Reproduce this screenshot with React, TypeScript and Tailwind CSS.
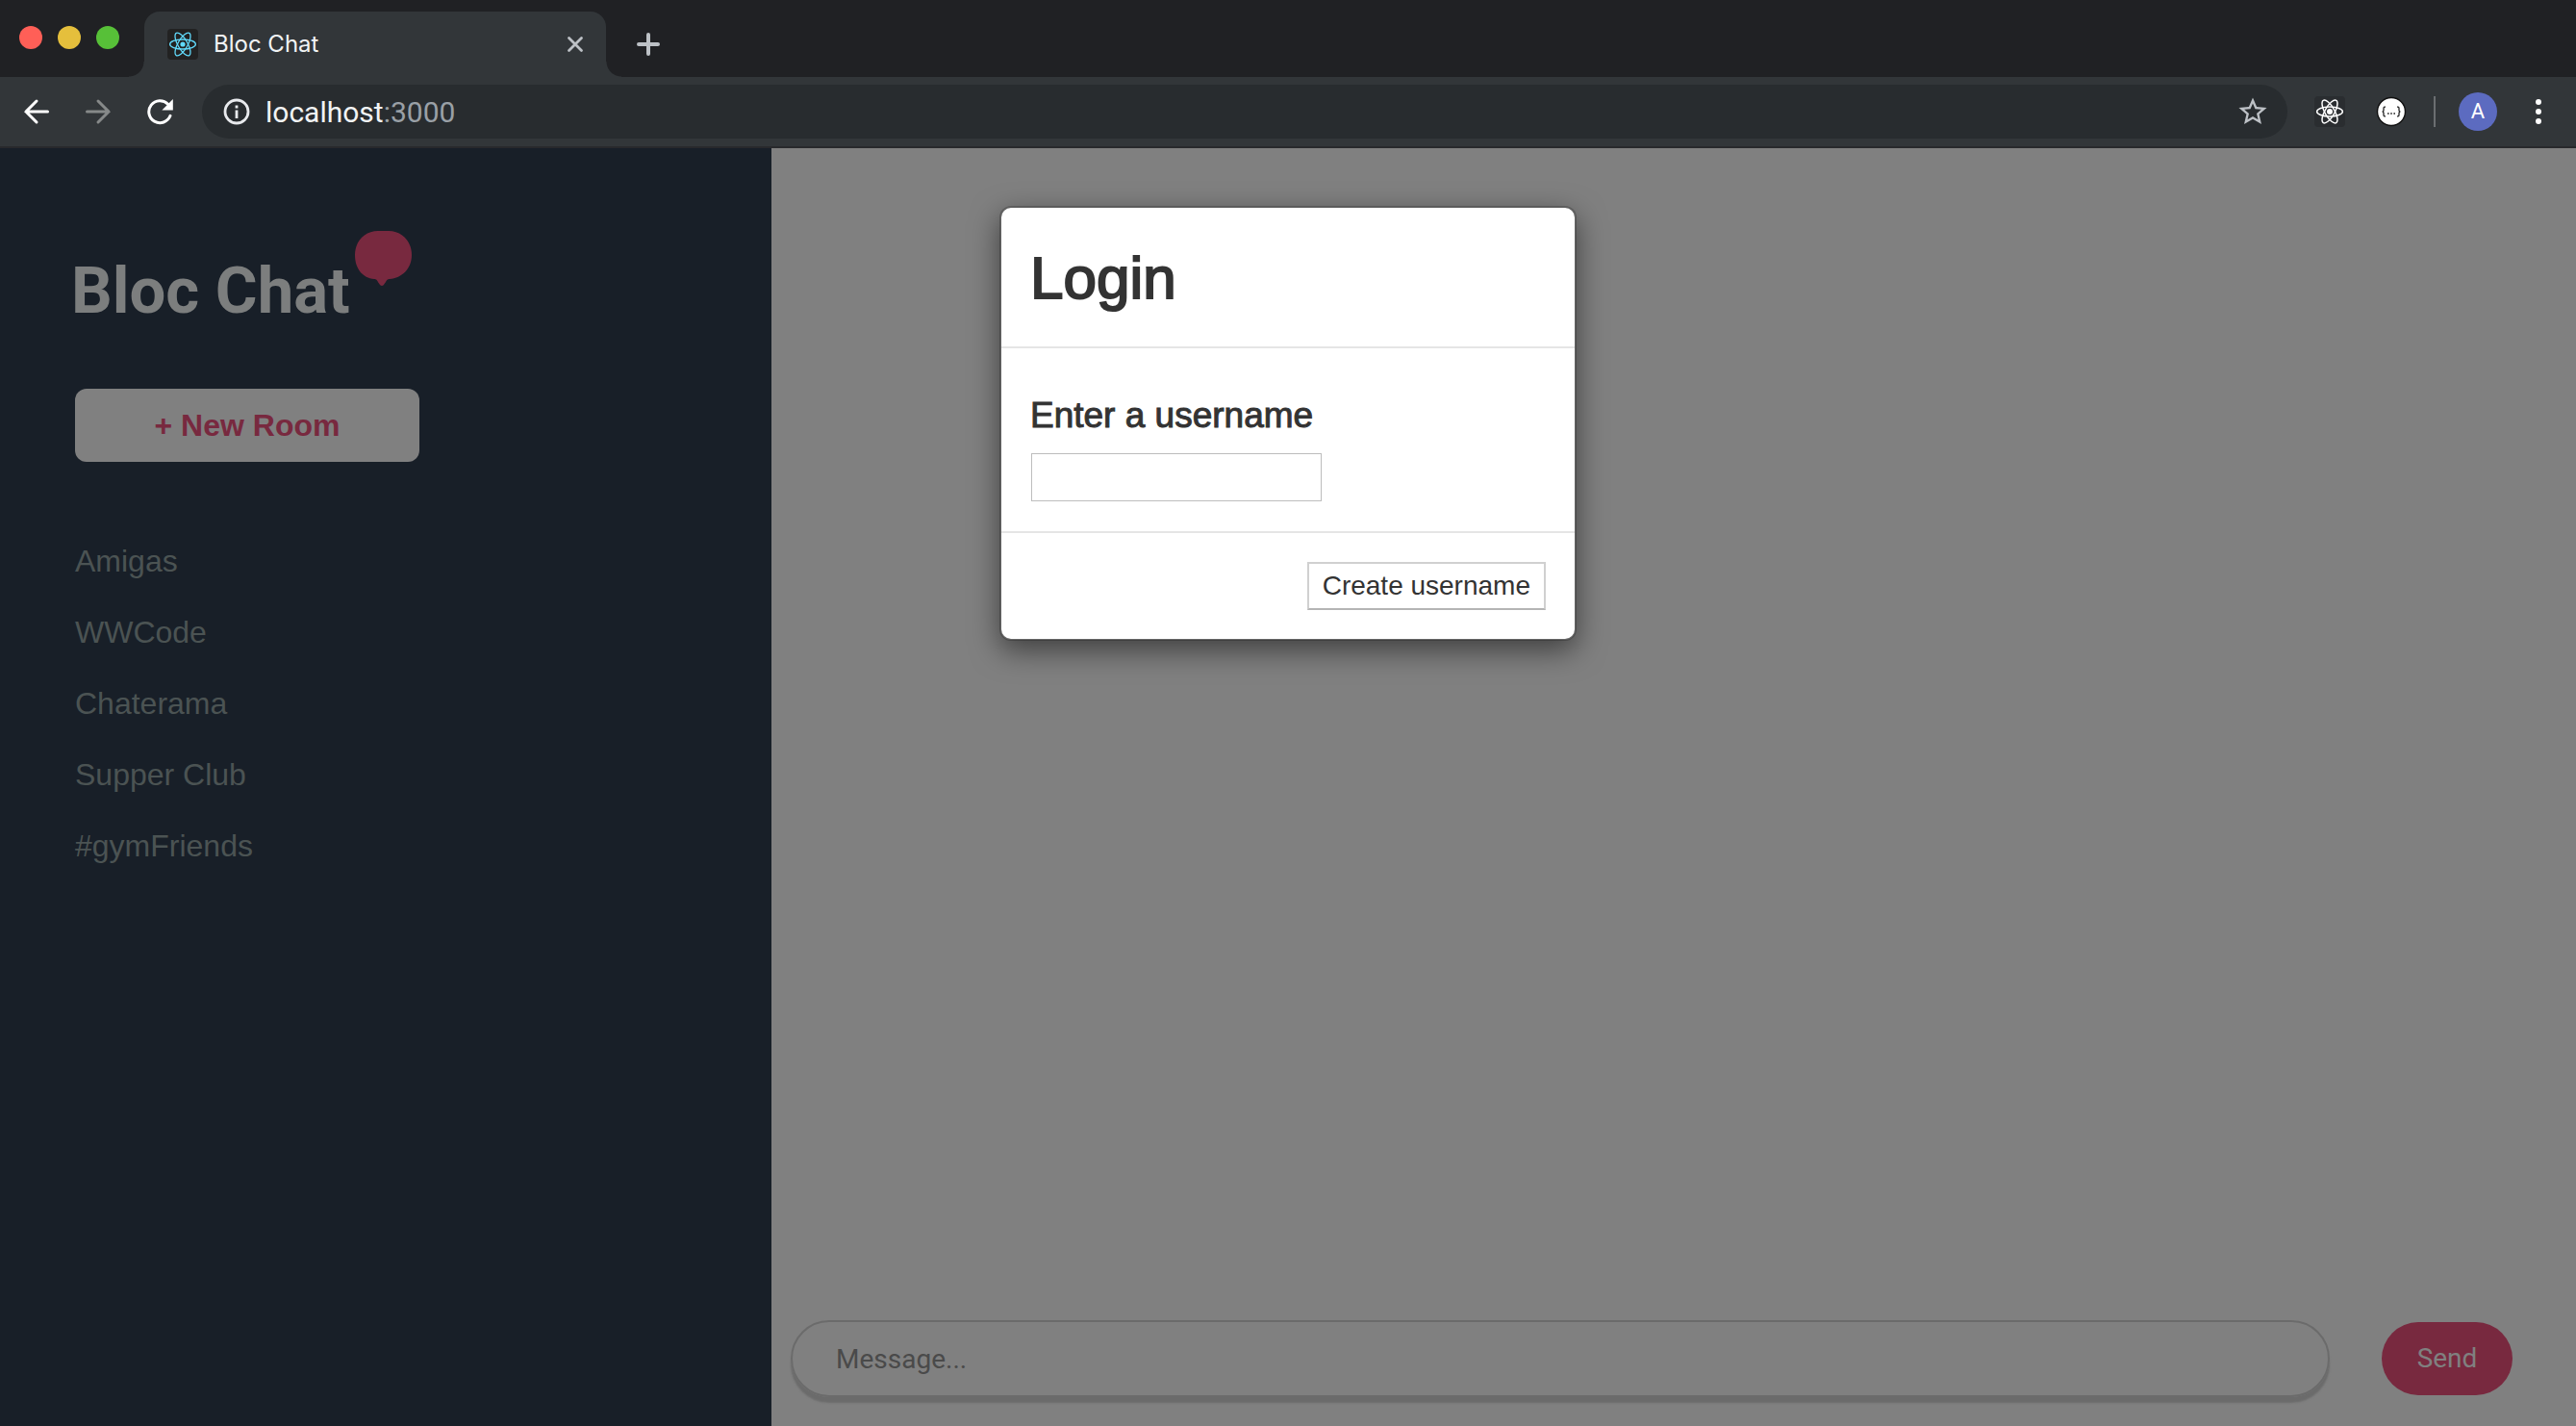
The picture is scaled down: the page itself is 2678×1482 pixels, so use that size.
import React from "react";

const ROOMS = ["Amigas", "WWCode", "Chaterama", "Supper Club", "#gymFriends"];

function ReactLogo({ className, strokeWidth, dot }: { className: string; strokeWidth: number; dot: number }) {
  return (
    <svg viewBox="0 0 32 32" fill="none" stroke="currentColor" strokeWidth={strokeWidth} className={className} aria-hidden="true">
      <ellipse cx="16" cy="16" rx="13.4" ry="5" />
      <ellipse cx="16" cy="16" rx="13.4" ry="5" transform="rotate(60 16 16)" />
      <ellipse cx="16" cy="16" rx="13.4" ry="5" transform="rotate(120 16 16)" />
      <circle cx="16" cy="16" r={dot} fill="currentColor" stroke="none" />
    </svg>
  );
}

function TabStrip() {
  return (
    <div className="flex h-20 items-start bg-[#202124]">
      <div className="flex gap-4 pt-[27px] pl-5">
        <button type="button" aria-label="Close window" className="size-6 rounded-full bg-[#ff5f57]" />
        <button type="button" aria-label="Minimize window" className="size-6 rounded-full bg-[#e5bf3c]" />
        <button type="button" aria-label="Zoom window" className="size-6 rounded-full bg-[#57c038]" />
      </div>
      <div className="flex h-full items-end pl-[10px]">
        <div className="size-4 bg-[radial-gradient(circle_at_0_0,transparent_15px,#323639_16px)]" />
      </div>
      <div className="mt-3 flex h-[68px] w-[480px] items-center rounded-t-2xl bg-[#323639] pr-5 pl-6">
        <span className="flex size-8 items-center justify-center rounded-sm bg-[#222222] text-[#61dafb]">
          <ReactLogo className="size-8" strokeWidth={1.3} dot={2.6} />
        </span>
        <span className="ml-4 flex-1 font-[Inter,sans-serif] text-2xl text-[#f1f3f4]">Bloc Chat</span>
        <button type="button" aria-label="Close tab" className="text-[#bdc1c6]">
          <svg viewBox="0 0 24 24" fill="none" stroke="currentColor" strokeWidth="2.8" strokeLinecap="round" className="size-6">
            <path d="M5.5 5.5l13 13M18.5 5.5l-13 13" />
          </svg>
        </button>
      </div>
      <div className="flex h-full items-end">
        <div className="size-4 bg-[radial-gradient(circle_at_100%_0,transparent_15px,#323639_16px)]" />
      </div>
      <button type="button" aria-label="New tab" className="mt-[34px] ml-4 text-[#bdc1c6]">
        <svg viewBox="0 0 24 24" fill="none" stroke="currentColor" strokeWidth="4" strokeLinecap="round" className="size-6">
          <path d="M12 2v20M2 12h20" />
        </svg>
      </button>
    </div>
  );
}

function Toolbar() {
  return (
    <div className="flex h-[74px] items-center border-b-2 border-[#28292c] bg-[#323639]">
      <div className="flex items-center gap-9 pl-6">
        <button type="button" aria-label="Back" className="text-white">
          <svg viewBox="0 0 28 28" fill="none" stroke="currentColor" strokeWidth="3" strokeLinecap="round" className="size-7">
            <path d="M25.5 14H3M14 3L3 14l11 11" />
          </svg>
        </button>
        <button type="button" aria-label="Forward" className="text-[#868989]">
          <svg viewBox="0 0 28 28" fill="none" stroke="currentColor" strokeWidth="3" strokeLinecap="round" className="size-7">
            <path d="M2.5 14H25M14 3l11 11-11 11" />
          </svg>
        </button>
        <button type="button" aria-label="Reload" className="text-white">
          <svg viewBox="0 0 28 28" className="size-7">
            <path d="M25 18.3A11.5 11.5 0 1 1 22.6 6.2" fill="none" stroke="currentColor" strokeWidth="3" strokeLinecap="round" />
            <path d="M27.8 1v11.4H16.4z" fill="currentColor" />
          </svg>
        </button>
      </div>
      <div className="ml-[30px] flex h-14 flex-1 items-center rounded-full bg-[#282c2f] pr-5 pl-[22px]">
        <svg viewBox="0 0 28 28" fill="none" className="size-7 text-[#e8eaed]" aria-hidden="true">
          <circle cx="14" cy="14" r="12" stroke="currentColor" strokeWidth="2.8" />
          <path d="M14 12.5v8.5M14 7.4v3" stroke="currentColor" strokeWidth="2.8" />
        </svg>
        <a href="#" className="ml-4 flex-1 font-[Roboto,sans-serif] text-[30px] text-[#f1f3f4]">
          localhost<span className="text-[#9aa0a6]">:3000</span>
        </a>
        <button type="button" aria-label="Bookmark" className="text-[#bdc1c6]">
          <svg viewBox="1 1 22 22" fill="currentColor" className="size-8">
            <path d="M22 9.24l-7.19-.62L12 2 9.19 8.63 2 9.24l5.46 4.73L5.82 21 12 17.27 18.18 21l-1.63-7.03L22 9.24zM12 15.4l-3.76 2.27 1-4.28-3.32-2.88 4.38-.38L12 6.1l1.71 4.04 4.38.38-3.32 2.88 1 4.28L12 15.4z" />
          </svg>
        </button>
      </div>
      <div className="flex items-center pr-9 pl-7">
        <button type="button" aria-label="React tools" className="rounded-sm bg-[#2a2d30] text-white">
          <ReactLogo className="size-8" strokeWidth={1.5} dot={3} />
        </button>
        <button type="button" aria-label="JSON viewer" className="ml-8">
          <svg viewBox="0 0 32 32" fill="none" className="size-8">
            <circle cx="16" cy="16" r="14.5" fill="#fff" stroke="#111" strokeWidth="1.4" />
            <path d="M10 11.2H9q-1 0-1 1.4v1.8q0 1.6-1.4 1.6Q8 16 8 17.6v1.8q0 1.4 1 1.4h1M22 11.2h1q1 0 1 1.4v1.8q0 1.6 1.4 1.6Q24 16 24 17.6v1.8q0 1.4-1 1.4h-1" stroke="#222" strokeWidth="1.3" />
            <path d="M12 18h1.6M15.2 18h1.6M18.4 18H20" stroke="#222" strokeWidth="1.6" />
          </svg>
        </button>
        <span className="ml-7 h-8 w-0.5 bg-[#6b6e71]" />
        <button type="button" aria-label="Profile" className="ml-6 size-10 rounded-full bg-[#5c6bc0] text-center font-[Roboto,sans-serif] text-[22px] leading-10 text-white">
          A
        </button>
        <button type="button" aria-label="Menu" className="ml-10 flex flex-col gap-1">
          <span className="size-1.5 rounded-full bg-white" />
          <span className="size-1.5 rounded-full bg-white" />
          <span className="size-1.5 rounded-full bg-white" />
        </button>
      </div>
    </div>
  );
}

function Sidebar() {
  return (
    <aside className="w-[802px] shrink-0 bg-[#181f28] px-[78px] pt-[86px]">
      <div className="flex items-start">
        <h1 className="mt-[22px] -ml-1 font-[Roboto,sans-serif] text-[67px] leading-[80px] font-bold text-[#7c7e7e]">Bloc Chat</h1>
        <svg viewBox="0 0 59 58" className="ml-[5px] h-[58px] w-[59px] text-[#78293f]" fill="currentColor" aria-hidden="true">
          <path d="M24 0H35C49 0 59 11 59 25S49 49 36 50C33 50 33 52 30 56Q28 58 26 56C23 52 23 50 20 50C8 49 0 39 0 25S10 0 24 0Z" />
        </svg>
      </div>
      <button type="button" className="mt-[62px] block h-[76px] w-[358px] rounded-xl bg-[#808080] text-[32px] font-bold text-[#78293f]">
        + New Room
      </button>
      <ul className="mt-[66px] text-[32px] leading-[74px] text-[#4b5353]">
        {ROOMS.map((room) => (
          <li key={room}>
            <a href="#">{room}</a>
          </li>
        ))}
      </ul>
    </aside>
  );
}

function LoginDialog() {
  return (
    <div role="dialog" aria-labelledby="login-title" className="absolute top-[60px] left-1/2 w-[600px] -translate-x-1/2 rounded-xl border-2 border-black/20 bg-white bg-clip-padding text-[#333333] shadow-[0_10px_30px_rgba(0,0,0,0.5)]">
      <div className="border-b-2 border-[#e5e5e5] px-[30px] pt-[40px] pb-[38px]">
        <h2 id="login-title" className="text-[62px] leading-[66px] [-webkit-text-stroke:2px_#333333]">Login</h2>
      </div>
      <form onSubmit={(e) => e.preventDefault()}>
        <div className="px-[30px] pt-[50px] pb-[31px]">
          <label htmlFor="username" className="block text-[37px] leading-10 [-webkit-text-stroke:1px_#333333]">Enter a username</label>
          <input id="username" type="text" className="mt-[19px] ml-px block h-[50px] w-[302px] border border-[#bdbdbd] bg-white px-2 text-[28px] outline-none" />
        </div>
        <div className="flex justify-end border-t-2 border-[#e5e5e5] p-[30px]">
          <button type="submit" className="h-[50px] border-2 border-[#d0d0d0] border-b-[#b4b4b4] bg-white px-[14px] text-[28px] leading-[46px]">
            Create username
          </button>
        </div>
      </form>
    </div>
  );
}

export default function App() {
  return (
    <div className="flex min-h-screen flex-col font-['Liberation_Sans',Arial,sans-serif]">
      <TabStrip />
      <Toolbar />
      <div className="relative flex flex-1">
        <Sidebar />
        <main className="flex flex-1 items-end bg-[#808080] pr-[66px] pb-[30px] pl-5 font-[Roboto,sans-serif] text-[28px]">
          <form className="flex flex-1 items-center" onSubmit={(e) => e.preventDefault()}>
            <input
              type="text"
              aria-label="Message"
              placeholder="Message..."
              className="h-20 flex-1 rounded-full border-2 border-[#6b6b6b] bg-transparent px-[45px] text-[#4a4a4a] shadow-[0_6px_2px_#6b6b6b] outline-none placeholder:text-[#4a4a4a]"
            />
            <button type="submit" className="ml-[54px] h-[76px] w-[136px] rounded-full bg-[#78293f] text-[#808080]">Send</button>
          </form>
        </main>
        <LoginDialog />
      </div>
    </div>
  );
}
